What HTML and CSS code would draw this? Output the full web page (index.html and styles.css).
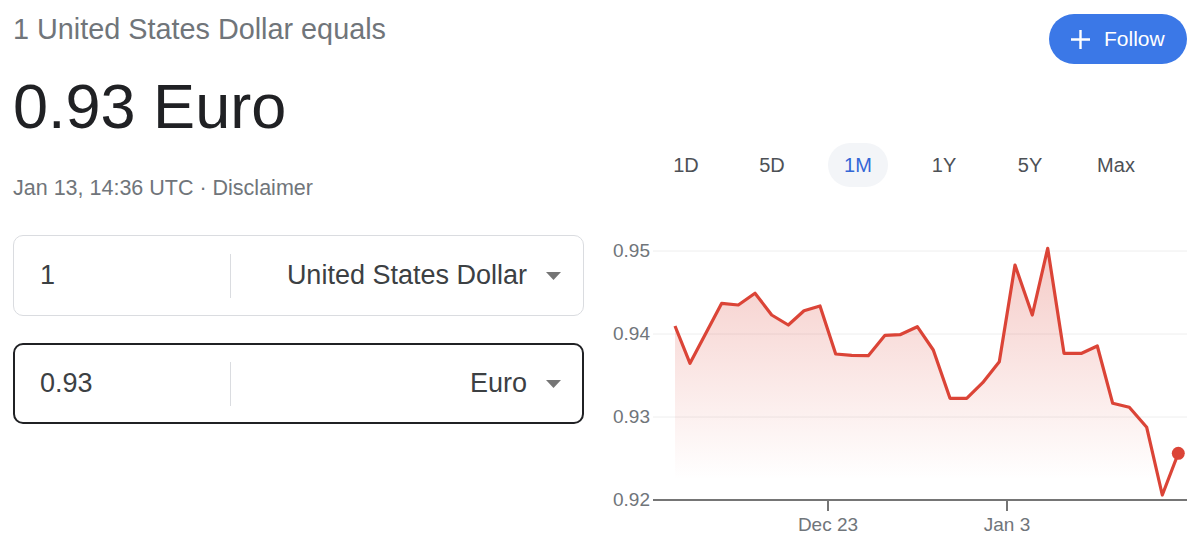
FILE: index.html
```html
<!DOCTYPE html>
<html lang="en">
<head>
    <meta charset="UTF-8">
    <meta name="viewport" content="width=device-width, initial-scale=1.0">
    <title>USD to EUR</title>
    <link rel="stylesheet" href="styles.css">
</head>
<body>
    <div class="page">
        <div class="left">
            <div class="eyebrow">1 United States Dollar equals</div>
            <div class="value">0.93 Euro</div>
            <div class="stamp">Jan 13, 14:36 UTC · Disclaimer</div>

            <div class="field">
                <div class="amount">1</div>
                <div class="divider"></div>
                <div class="currency">United States Dollar</div>
                <svg class="caret" width="15" height="8" viewBox="0 0 15 8"><path d="M0 0h15L7.5 8z" fill="#757575"/></svg>
            </div>
            <div class="field active">
                <div class="amount">0.93</div>
                <div class="divider"></div>
                <div class="currency">Euro</div>
                <svg class="caret" width="15" height="8" viewBox="0 0 15 8"><path d="M0 0h15L7.5 8z" fill="#757575"/></svg>
            </div>
        </div>

        <div class="right">
            <button class="follow-btn">
                <svg width="19" height="19" viewBox="0 0 19 19"><path d="M9.5 0v19M0 9.5h19" stroke="#fff" stroke-width="2.4"/></svg>
                <span>Follow</span>
            </button>

            <div class="ranges">
                <div class="range">1D</div>
                <div class="range">5D</div>
                <div class="range selected">1M</div>
                <div class="range">1Y</div>
                <div class="range">5Y</div>
                <div class="range">Max</div>
            </div>

            <svg class="chart" width="587" height="316" viewBox="0 0 587 316">
                <defs>
                    <linearGradient id="area" gradientUnits="userSpaceOnUse" x1="0" y1="18" x2="0" y2="250">
                        <stop offset="0" stop-color="#db4437" stop-opacity="0.28"/>
                        <stop offset="1" stop-color="#db4437" stop-opacity="0"/>
                    </linearGradient>
                </defs>
                <!-- grid -->
                <line class="grid" x1="53" y1="21" x2="587" y2="21"/>
                <line class="grid" x1="53" y1="104" x2="587" y2="104"/>
                <line class="grid" x1="53" y1="187" x2="587" y2="187"/>
                <text class="ylabel" x="50" y="27">0.95</text>
                <text class="ylabel" x="50" y="110">0.94</text>
                <text class="ylabel" x="50" y="193">0.93</text>
                <text class="ylabel" x="50" y="276">0.92</text>

                <polygon fill="url(#area)" points="75,96 90,133.3 121.7,73.3 138.3,75 155,63.3 171.7,85 188.3,95 204,80.7 220,76 235.7,124 251.7,125.3 268.3,125.7 285,105.3 300,104.7 317.3,96.7 333.3,120 350,168.3 366.7,168.3 382.7,152.7 399.3,131.7 415,35 432.3,85 447.7,18.3 464,123.3 481.7,123.3 497.3,116 512.7,173.3 529.3,177.3 546.7,197.3 562.3,265 578.3,223.3 578.3,270 75,270"/>

                <!-- x axis -->
                <line class="axis" x1="53" y1="270" x2="587" y2="270"/>
                <line class="axis" x1="228" y1="270" x2="228" y2="281"/>
                <line class="axis" x1="407" y1="270" x2="407" y2="281"/>
                <text class="xlabel" x="228" y="301">Dec 23</text>
                <text class="xlabel" x="407" y="301">Jan 3</text>

                <polyline class="line" points="75,96 90,133.3 121.7,73.3 138.3,75 155,63.3 171.7,85 188.3,95 204,80.7 220,76 235.7,124 251.7,125.3 268.3,125.7 285,105.3 300,104.7 317.3,96.7 333.3,120 350,168.3 366.7,168.3 382.7,152.7 399.3,131.7 415,35 432.3,85 447.7,18.3 464,123.3 481.7,123.3 497.3,116 512.7,173.3 529.3,177.3 546.7,197.3 562.3,265 578.3,223.3"/>
                <circle cx="578.3" cy="223.3" r="6.5" fill="#db4437"/>
            </svg>
        </div>
    </div>
</body>
</html>
```

FILE: styles.css
```css
body {
    margin: 0;
    background: #fff;
    font-family: 'Liberation Sans', Arial, Helvetica, sans-serif;
    color: #202124;
}
.page {
    display: flex;
    justify-content: space-between;
    padding: 0 13px;
}
.left {
    width: 571px;
    padding-top: 12px;
}
.eyebrow {
    font-size: 28.8px;
    line-height: 34px;
    color: #70757a;
}
.value {
    margin-top: 24px;
    font-size: 63px;
    line-height: 72px;
    color: #202124;
}
.stamp {
    margin-top: 33px;
    font-size: 21.5px;
    line-height: 26px;
    color: #70757a;
}
.field {
    box-sizing: border-box;
    height: 81px;
    margin-top: 34px;
    display: flex;
    align-items: center;
    border: 1px solid #dadce0;
    border-radius: 10px;
    padding: 0 22px 0 26px;
    font-size: 27px;
    color: #3c4043;
}
.field.active {
    margin-top: 27px;
    border: 2px solid #202124;
    padding: 0 21px 0 25px;
}
.amount {
    width: 190px;
}
.divider {
    width: 1px;
    height: 44px;
    background: #dadce0;
}
.currency {
    flex: 1;
    text-align: right;
}
.caret {
    margin-left: 19px;
}
.right {
    width: 587px;
    display: flex;
    flex-direction: column;
}
.follow-btn {
    align-self: flex-end;
    margin-top: 14px;
    width: 138px;
    height: 50px;
    border: none;
    border-radius: 25px;
    background: #3b78e7;
    color: #fff;
    font-family: inherit;
    font-size: 21px;
    display: flex;
    align-items: center;
    gap: 14px;
    padding: 0 0 0 22px;
    cursor: pointer;
}
.ranges {
    display: flex;
    margin: 79px 0 0 43px;
}
.range {
    width: 86px;
    height: 44px;
    display: flex;
    align-items: center;
    justify-content: center;
    font-size: 20px;
    color: #4d5156;
}
.range.selected {
    color: #3367d6;
    position: relative;
    z-index: 0;
}
.range.selected::before {
    content: "";
    position: absolute;
    left: 13px;
    top: 0;
    width: 60px;
    height: 44px;
    border-radius: 22px;
    background: #f3f5f8;
    z-index: -1;
}
.chart {
    display: block;
    margin-top: 43px;
    overflow: visible;
}
.grid {
    stroke: #eeeeee;
    stroke-width: 1;
}
.axis {
    stroke: #757575;
    stroke-width: 2;
}
.ylabel {
    font-size: 19px;
    fill: #70757a;
    text-anchor: end;
}
.xlabel {
    font-size: 19px;
    fill: #70757a;
    text-anchor: middle;
}
.line {
    fill: none;
    stroke: #db4437;
    stroke-width: 3.2;
    stroke-linejoin: round;
}
```
